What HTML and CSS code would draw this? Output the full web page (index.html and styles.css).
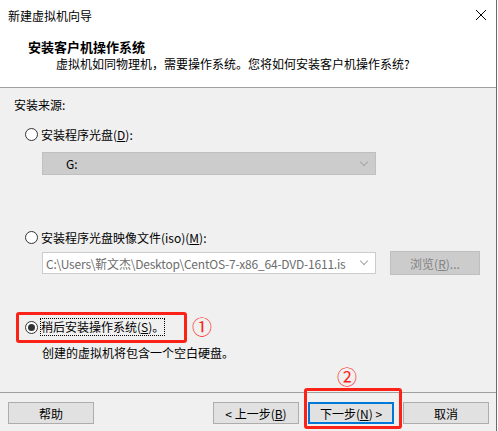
FILE: index.html
```html
<!DOCTYPE html>
<html lang="zh-CN">
  <head>
    <meta charset="UTF-8" />
    <title>新建虚拟机向导</title>
    <link rel="stylesheet" href="styles.css">
  </head>
  <body>
    <div class="window">
      <div class="titlebar">
        <span>新建虚拟机向导</span>
        <svg class="close" width="12" height="12" viewBox="0 0 12 12">
          <path d="M1 1 L11 11 M11 1 L1 11" stroke="#000" stroke-width="1" fill="none" />
        </svg>
      </div>
      <div class="header">
        <div class="header-title">安装客户机操作系统</div>
        <div class="header-sub">虚拟机如同物理机，需要操作系统。您将如何安装客户机操作系统?</div>
      </div>
      <div class="content">
        <div class="src-label">安装来源:</div>
        <div class="radio-row row-disc">
          <span class="radio"></span>
          <span>安装程序光盘(<u>D</u>):</span>
        </div>
        <div class="dropdown">
          <span>G:</span>
          <span class="chevron"></span>
        </div>
        <div class="radio-row row-iso">
          <span class="radio"></span>
          <span>安装程序光盘映像文件(iso)(<u>M</u>):</span>
        </div>
        <div class="iso-row">
          <div class="combo">
            <span class="combo-text">C:\Users\靳文杰\Desktop\CentOS-7-x86_64-DVD-1611.is</span>
            <span class="chevron"></span>
          </div>
          <div class="browse">浏览(<u>R</u>)...</div>
        </div>
        <div class="radio-row row-later">
          <span class="radio radio-checked"></span>
          <span class="focus">稍后安装操作系统(<u>S</u>)。</span>
        </div>
        <div class="hint">创建的虚拟机将包含一个空白硬盘。</div>
        <div class="mark mark-box1"></div>
        <div class="mark-num num1">①</div>
        <div class="mark-num num2">②</div>
      </div>
      <div class="footer">
        <div class="btn">帮助</div>
        <div class="btn-group">
          <div class="btn">&lt; 上一步(<u>B</u>)</div>
          <div class="btn btn-default">下一步(<u>N</u>) &gt;</div>
          <div class="btn">取消</div>
        </div>
        <div class="mark mark-box2"></div>
      </div>
    </div>
  </body>
</html>
```

FILE: styles.css
```css
body {
  margin: 0;
  background: #ffffff;
  font-family: "Noto Sans CJK SC", "Liberation Sans", sans-serif;
  font-size: 12px;
  color: #000;
}
u {
  text-decoration: underline;
  text-underline-offset: 1px;
}
.window {
  width: 496px;
  height: 431px;
  border-right: 1px solid #6b6b6b;
  display: flex;
  flex-direction: column;
  background: #f0f0f0;
}
.titlebar {
  height: 30px;
  background: #fff;
  border-top: 1px solid #fff;
  box-sizing: border-box;
  display: flex;
  align-items: center;
  justify-content: space-between;
  padding: 0 9px 0 8px;
  line-height: 16px;
}
.close {
  margin-top: -1px;
}
.header {
  background: #fff;
  border-bottom: 1px solid #a0a0a0;
  box-sizing: border-box;
  height: 58px;
  padding: 8px 0 0 28px;
}
.header-title {
  font-weight: bold;
  font-size: 13px;
  line-height: 18px;
}
.header-sub {
  padding-left: 28px;
  line-height: 16px;
}
.content {
  position: relative;
  height: 304px;
  padding-top: 9px;
  box-sizing: border-box;
}
.src-label {
  padding-left: 14px;
  line-height: 16px;
}
.radio-row {
  display: flex;
  align-items: center;
  height: 16px;
  padding-left: 25px;
  column-gap: 3px;
}
.row-disc {
  margin-top: 13px;
}
.row-iso {
  margin-top: 54px;
}
.row-later {
  margin-top: 44px;
}
.radio {
  width: 13px;
  height: 13px;
  box-sizing: border-box;
  border: 1px solid #333;
  border-radius: 50%;
  background: #fff;
  display: flex;
  align-items: center;
  justify-content: center;
}
.radio-checked::after {
  content: "";
  width: 7px;
  height: 7px;
  border-radius: 50%;
  background: #333;
}
.focus {
  outline: 1px dotted #000;
  outline-offset: 0;
  line-height: 16px;
}
.dropdown {
  margin: 10px 0 0 42px;
  width: 334px;
  height: 23px;
  box-sizing: border-box;
  background: #cccccc;
  border: 1px solid #bfbfbf;
  display: flex;
  align-items: center;
  justify-content: space-between;
  padding: 0 8px 0 23px;
}
.chevron {
  flex: none;
  width: 5px;
  height: 5px;
  border-right: 1px solid #a6a6a6;
  border-bottom: 1px solid #a6a6a6;
  transform: rotate(45deg);
  margin-top: -4px;
}
.iso-row {
  margin-top: 6px;
  display: flex;
  align-items: center;
  height: 24px;
  padding-left: 42px;
  column-gap: 14px;
}
.combo {
  width: 334px;
  height: 22px;
  box-sizing: border-box;
  background: #fff;
  border: 1px solid #cccccc;
  display: flex;
  align-items: center;
  justify-content: space-between;
  padding: 0 8px 0 3px;
}
.combo-text {
  white-space: nowrap;
  color: #6d6d6d;
  letter-spacing: -0.2px;
}
.browse {
  width: 90px;
  height: 24px;
  box-sizing: border-box;
  background: #cccccc;
  border: 1px solid #bfbfbf;
  color: #838383;
  display: flex;
  align-items: center;
  justify-content: center;
}
.hint {
  margin-top: 10px;
  padding-left: 42px;
  line-height: 16px;
}
.footer {
  position: relative;
  flex: 1;
  border-top: 1px solid #a0a0a0;
  display: flex;
  justify-content: space-between;
  align-items: flex-start;
  padding: 9px 7px 0 8px;
}
.btn-group {
  display: flex;
  column-gap: 9px;
}
.btn {
  width: 86px;
  height: 22px;
  box-sizing: border-box;
  background: #e1e1e1;
  border: 1px solid #adadad;
  display: flex;
  align-items: center;
  justify-content: center;
}
.btn-default {
  border: 2px solid #0078d7;
}
.mark {
  position: absolute;
  border: 3px solid #fb2317;
  border-radius: 3px;
  box-sizing: border-box;
}
.mark-box1 {
  left: 16px;
  top: 224px;
  width: 171px;
  height: 31px;
}
.mark-box2 {
  left: 304px;
  top: -5px;
  width: 98px;
  height: 41px;
}
.mark-num {
  position: absolute;
  color: #fb2317;
  font-size: 20px;
  line-height: 22px;
}
.num1 {
  left: 192px;
  top: 228px;
}
.num2 {
  left: 337px;
  top: 278px;
}
```
